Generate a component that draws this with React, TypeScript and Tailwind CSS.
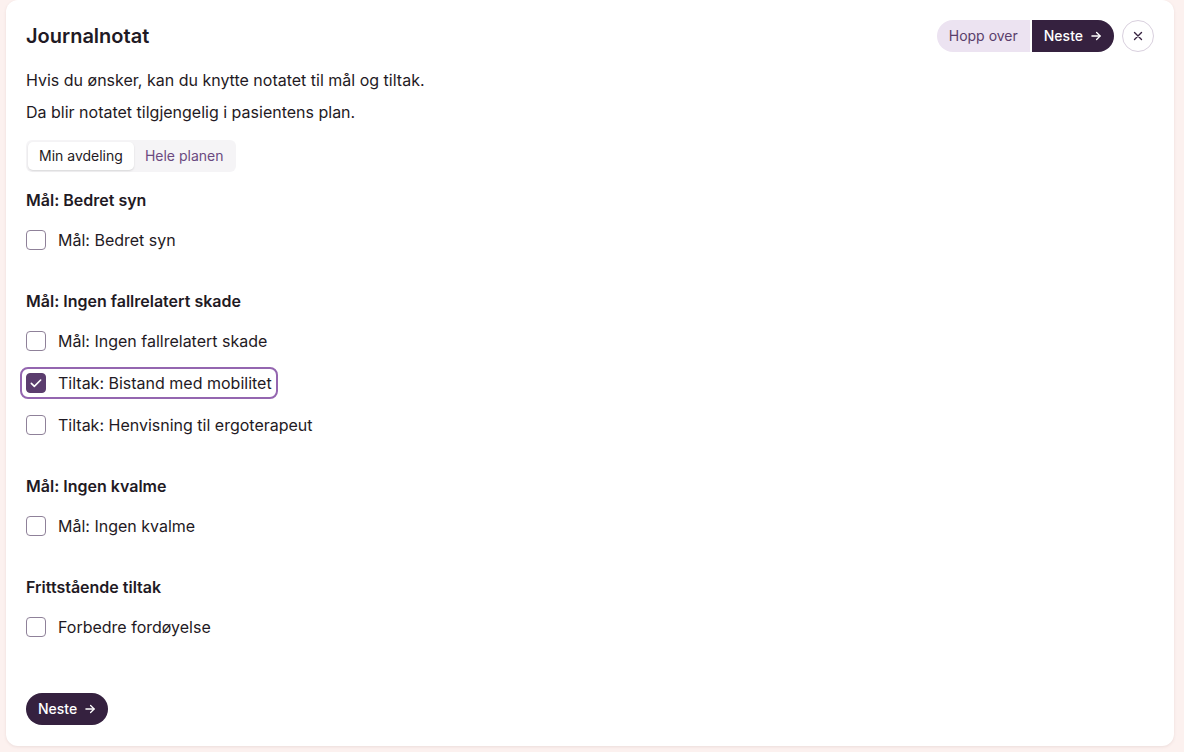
import { useState } from 'react';

type Item = { id: string; label: string };
type Group = { title: string; items: Item[] };

const groups: Group[] = [
  { title: 'Mål: Bedret syn', items: [{ id: 'syn', label: 'Mål: Bedret syn' }] },
  {
    title: 'Mål: Ingen fallrelatert skade',
    items: [
      { id: 'fall', label: 'Mål: Ingen fallrelatert skade' },
      { id: 'mobilitet', label: 'Tiltak: Bistand med mobilitet' },
      { id: 'ergo', label: 'Tiltak: Henvisning til ergoterapeut' },
    ],
  },
  { title: 'Mål: Ingen kvalme', items: [{ id: 'kvalme', label: 'Mål: Ingen kvalme' }] },
  { title: 'Frittstående tiltak', items: [{ id: 'fordoyelse', label: 'Forbedre fordøyelse' }] },
];

function ArrowRight() {
  return (
    <svg width="14" height="14" viewBox="0 0 24 24" fill="none" stroke="currentColor" strokeWidth={2.2} strokeLinecap="round" strokeLinejoin="round">
      <path d="M5 12h14" />
      <path d="M13 6l6 6-6 6" />
    </svg>
  );
}

function CheckRow({ item, checked, onToggle }: { item: Item; checked: boolean; onToggle: () => void }) {
  return (
    <label
      className={`-ml-[6px] flex h-8 w-fit cursor-pointer items-center gap-3 rounded-lg border-2 px-[4px] ${
        checked ? 'border-[#9466b0]' : 'border-transparent'
      }`}
    >
      <span
        className={`flex h-5 w-5 items-center justify-center rounded-[4px] border ${
          checked ? 'border-[#5b3d6e] bg-[#5b3d6e]' : 'border-[#8f8199] bg-white'
        }`}
      >
        {checked && (
          <svg width="16" height="16" viewBox="0 0 24 24" fill="none" stroke="white" strokeWidth={2.4} strokeLinecap="round" strokeLinejoin="round">
            <path d="M5 12.5l4.5 4.5L19 7.5" />
          </svg>
        )}
      </span>
      <input type="checkbox" className="hidden" checked={checked} onChange={onToggle} />
      <span className="text-base text-[#1f1a24]">{item.label}</span>
    </label>
  );
}

export default function App() {
  const [tab, setTab] = useState<'min' | 'hele'>('min');
  const [checked, setChecked] = useState<Record<string, boolean>>({ mobilitet: true });

  const toggle = (id: string) => setChecked((c) => ({ ...c, [id]: !c[id] }));

  return (
    <div className="min-h-[752px] bg-[#fcf1ef] pl-[6px] pr-[10px] pb-[7px]" style={{ fontFamily: 'Inter, "Noto Sans", sans-serif' }}>
      <div className="w-[1168px] rounded-xl bg-white px-5 pt-5 pb-[21px] shadow-[0_1px_3px_rgba(120,80,80,0.12)]">
        {/* Header */}
        <div className="flex h-8 items-center justify-between">
          <h1 className="text-xl font-semibold text-[#1f1a24]">Journalnotat</h1>
          <div className="flex items-center">
            <button className="flex h-8 items-center rounded-l-full bg-[#ece3f1] px-3 text-sm text-[#5a3e6b]">
              Hopp over
            </button>
            <button className="ml-[2px] flex h-8 items-center gap-1.5 rounded-r-full bg-[#35213f] pl-3 pr-[11px] text-sm font-medium text-white">
              Neste
              <ArrowRight />
            </button>
            <button className="ml-2 flex h-8 w-8 items-center justify-center rounded-full border border-[#d9d0de] text-[#35213f]">
              <svg width="14" height="14" viewBox="0 0 24 24" fill="none" stroke="currentColor" strokeWidth={2.4} strokeLinecap="round">
                <path d="M6 6l12 12M18 6L6 18" />
              </svg>
            </button>
          </div>
        </div>

        {/* Intro */}
        <div className="mt-4 flex flex-col gap-2 text-base leading-6 text-[#1f1a24]">
          <p>Hvis du ønsker, kan du knytte notatet til mål og tiltak.</p>
          <p>Da blir notatet tilgjengelig i pasientens plan.</p>
        </div>

        {/* Tabs */}
        <div className="mt-4 flex h-8 w-fit items-center rounded-md bg-[#f5f4f6] p-[2px]">
          <button
            onClick={() => setTab('min')}
            className={`h-7 rounded-[5px] px-[11px] text-sm ${
              tab === 'min' ? 'bg-white text-[#1f1a24] shadow-[0_1px_2px_rgba(0,0,0,0.12)]' : 'text-[#6b4a80]'
            }`}
          >
            Min avdeling
          </button>
          <button
            onClick={() => setTab('hele')}
            className={`h-7 rounded-[5px] px-[11px] text-sm ${
              tab === 'hele' ? 'bg-white text-[#1f1a24] shadow-[0_1px_2px_rgba(0,0,0,0.12)]' : 'text-[#6b4a80]'
            }`}
          >
            Hele planen
          </button>
        </div>

        {/* Groups */}
        <div className="mt-4 flex flex-col gap-[33px]">
          {groups.map((g) => (
            <section key={g.title}>
              <h2 className="h-6 text-base font-semibold leading-6 text-[#1f1a24]">{g.title}</h2>
              <div className="mt-3 flex flex-col gap-2.5">
                {g.items.map((it) => (
                  <CheckRow key={it.id} item={it} checked={!!checked[it.id]} onToggle={() => toggle(it.id)} />
                ))}
              </div>
            </section>
          ))}
        </div>

        <button className="mt-[50px] flex h-8 items-center gap-1.5 rounded-full bg-[#35213f] pl-3 pr-[11px] text-sm font-medium text-white">
          Neste
          <ArrowRight />
        </button>
      </div>
    </div>
  );
}
